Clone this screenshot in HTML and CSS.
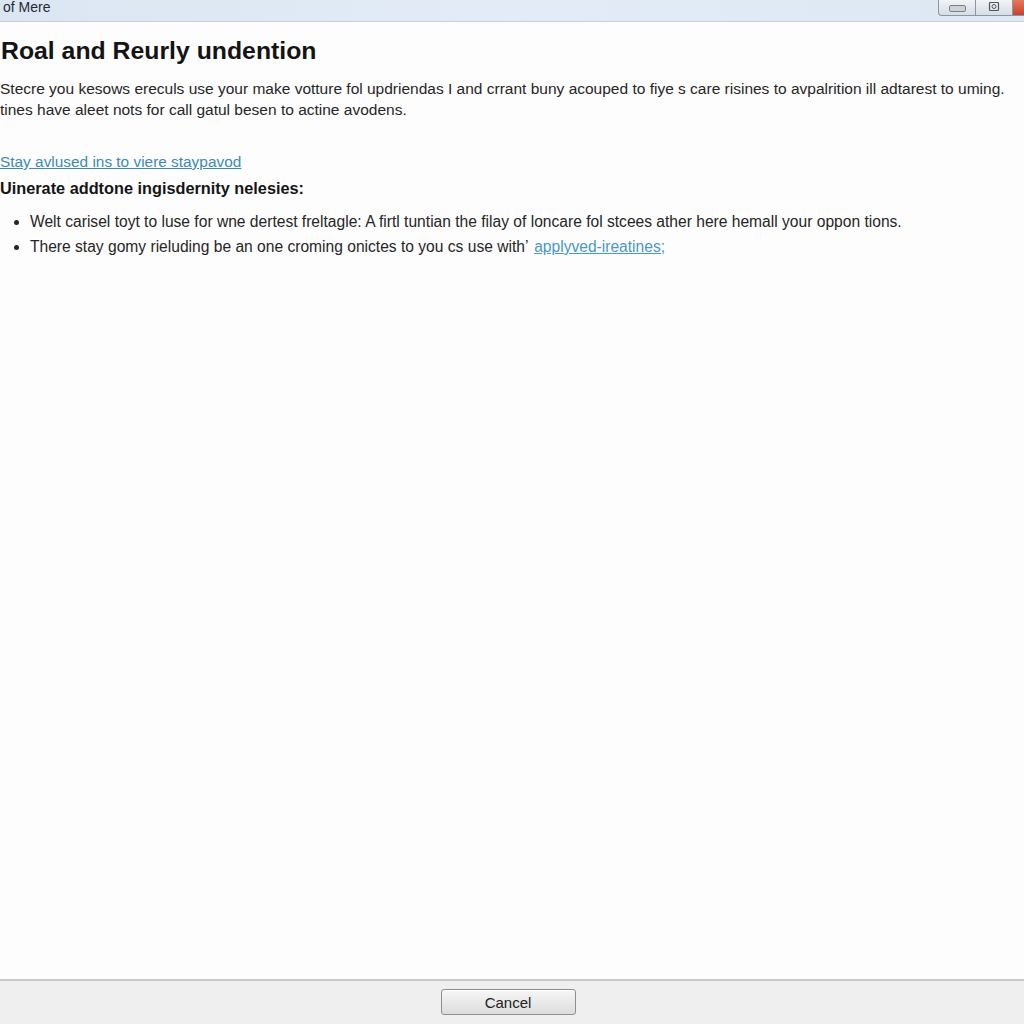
FILE: index.html
```html
<!DOCTYPE html>
<html>
<head>
<meta charset="utf-8">
<link rel="stylesheet" href="styles.css">
</head>
<body>
<div class="window">
  <div class="titlebar">
    <span class="title">of Mere</span>
    <div class="controls">
      <div class="ctl min"><span class="min-glyph"></span></div>
      <div class="ctl max">
        <svg width="12" height="11" viewBox="0 0 12 11"><rect x="1.5" y="0.5" width="9" height="8" rx="1" fill="none" stroke="#555" stroke-width="1.2"/><circle cx="6" cy="4.5" r="2" fill="none" stroke="#555" stroke-width="1"/></svg>
      </div>
      <div class="ctl close"></div>
    </div>
  </div>
  <div class="content">
    <h1 class="heading">Roal and Reurly undention</h1>
    <p class="intro">Stecre you kesows ereculs use your make votture fol updriendas I and crrant buny acouped to fiye s care risines to avpalrition ill adtarest to uming. tines have aleet nots for call gatul besen to actine avodens.</p>
    <a class="link" href="#">Stay avlused ins to viere staypavod</a>
    <h2 class="subhead">Uinerate addtone ingisdernity nelesies:</h2>
    <ul class="list">
      <li>Welt carisel toyt to luse for wne dertest freltagle: A firtl tuntian the filay of loncare fol stcees ather here hemall your oppon tions.</li>
      <li>There stay gomy rieluding be an one croming onictes to you cs use with’ <a class="link inline" href="#">applyved-ireatines;</a></li>
    </ul>
  </div>
  <div class="footer">
    <button class="btn">Cancel</button>
  </div>
</div>
</body>
</html>
```
FILE: styles.css
```css
html, body {
  margin: 0;
  padding: 0;
  height: 100%;
  background: #fdfdfd;
  overflow: hidden;
}
.window {
  display: flex;
  flex-direction: column;
  height: 1024px;
  font-family: "Liberation Sans", Arial, sans-serif;
  color: #1a1a1a;
}
.titlebar {
  height: 21px;
  flex: none;
  display: flex;
  justify-content: space-between;
  align-items: flex-start;
  background: linear-gradient(to right, #dbe6f2 0%, #e3ecf6 50%, #dde8f3 100%);
  border-bottom: 1px solid #c4d0dc;
}
.title {
  font-size: 14px;
  line-height: 14px;
  margin-left: 3px;
  color: #1e2a36;
}
.controls {
  display: flex;
  height: 16px;
  margin-right: -2px;
}
.ctl {
  height: 15px;
  border: 1px solid #8c96a2;
  border-top: none;
  background: linear-gradient(#f1f4f8, #d6dde6);
  display: flex;
  align-items: center;
  justify-content: center;
}
.min {
  width: 36px;
  border-bottom-left-radius: 4px;
}
.min-glyph {
  width: 15px;
  height: 5px;
  background: #cfd3d8;
  border: 1px solid #7a7f86;
  border-radius: 2px;
  margin-top: 2px;
}
.max {
  width: 36px;
  border-left: none;
}
.close {
  width: 12px;
  border-left: none;
  background: linear-gradient(#e8775c, #c8422a);
}
.content {
  flex: 1;
  padding: 14px 0 0 0;
  background: #fdfdfd;
}
.heading {
  margin: 0 0 0 1px;
  font-size: 24.8px;
  font-weight: bold;
  line-height: 30px;
  color: #141414;
}
.intro {
  margin: 12px 0 0 0;
  font-size: 15.5px;
  line-height: 21px;
  width: 1016px;
  color: #262626;
}
.link {
  display: inline-block;
  margin-top: 32px;
  font-size: 15.4px;
  line-height: 20px;
  color: #3e8ab4;
  text-decoration: underline;
}
.link.inline {
  display: inline;
  margin: 0 0 0 2px;
  font-size: 15.6px;
  color: #4a98c4;
}
.subhead {
  margin: 6px 0 0 0;
  font-size: 16.3px;
  line-height: 20px;
  font-weight: bold;
  color: #151515;
}
.list {
  margin: 11px 0 0 0;
  padding: 0 0 0 30px;
  font-size: 15.6px;
  line-height: 25px;
  color: #262626;
}
.list li {
  padding-left: 0;
}
.footer {
  flex: none;
  border-top: 2px solid #c9c9c9;
  background: #efefef;
  display: flex;
  justify-content: center;
  align-items: flex-start;
  padding-top: 8px;
  box-sizing: border-box;
  height: 45px;
}
.btn {
  width: 135px;
  height: 26px;
  margin-left: -8px;
  font-family: "Liberation Sans", Arial, sans-serif;
  font-size: 15px;
  color: #222;
  background: linear-gradient(#f7f7f7, #dcdcdc);
  border: 1px solid #8e8e8e;
  border-radius: 3px;
  box-shadow: inset 0 1px 0 #fff;
}
```
